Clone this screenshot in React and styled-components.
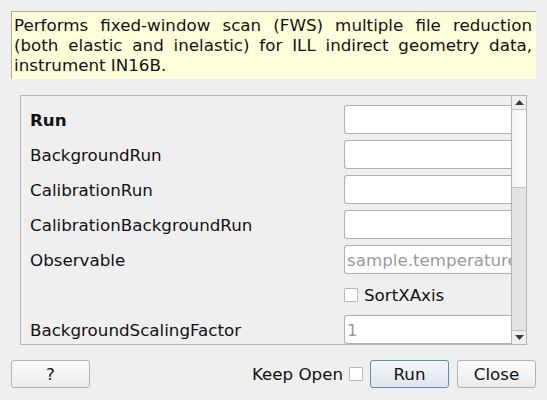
import React from "react";
import styled, { createGlobalStyle } from "styled-components";

const Global = createGlobalStyle`
  html, body { margin: 0; padding: 0; background: #efefef; }
  body { font-family: "DejaVu Sans", sans-serif; font-size: 16.7px; color: #111; }
  * { box-sizing: border-box; }
`;

const Dialog = styled.div`
  width: 547px;
  height: 400px;
  display: flex;
  flex-direction: column;
  padding: 11px 11px 0 11px;
  background: #efefef;
`;

const Description = styled.div`
  height: 68px;
  background: #ffffdc;
  border-top: 1px solid #a9a9a9;
  border-left: 1px solid #a9a9a9;
  padding: 3px 4px 0 2px;
  line-height: 20px;
  text-align: justify;
  text-align-last: left;
`;

const ScrollArea = styled.div`
  margin: 16px 9px 0 9px;
  height: 250px;
  border: 1px solid #b5b5b5;
  display: flex;
  overflow: hidden;
`;

const Viewport = styled.div`
  flex: 1;
  overflow: hidden;
  padding: 9px 0 0 9px;
  display: grid;
  grid-template-columns: 314px 1fr;
  grid-auto-rows: 29px;
  row-gap: 6px;
  align-content: start;
`;

const Label = styled.div`
  display: flex;
  align-items: center;
  font-weight: ${(p) => (p.$bold ? "bold" : "normal")};
  white-space: nowrap;
`;

const Input = styled.div`
  height: 29px;
  background: #fff;
  border: 1px solid #b0b0b0;
  border-right: none;
  border-radius: 3px 0 0 3px;
  display: flex;
  align-items: center;
  padding-left: 2px;
  color: #9a9a9a;
  white-space: nowrap;
  overflow: hidden;
`;

const CheckRow = styled.div`
  display: flex;
  align-items: center;
  gap: 6px;
  height: 27px;
  align-self: center;
`;

const Box = styled.span`
  width: 14px;
  height: 14px;
  background: #fff;
  border: 1px solid #b8b8b8;
  border-radius: 1px;
  display: inline-block;
`;

const ScrollBar = styled.div`
  width: 15px;
  border-left: 1px solid #b5b5b5;
  display: flex;
  flex-direction: column;
  background: #e4e4e4;
`;

const Arrow = styled.div`
  height: 14px;
  background: #efefef;
  border-${(p) => (p.$down ? "top" : "bottom")}: 1px solid #c4c4c4;
  display: flex;
  align-items: center;
  justify-content: center;
  margin-top: ${(p) => (p.$down ? "auto" : "0")};
`;

const Thumb = styled.div`
  height: 78px;
  background: linear-gradient(to right, #f4f4f4, #fbfbfb);
  border-bottom: 1px solid #c4c4c4;
`;

const Footer = styled.div`
  margin-top: 15px;
  display: flex;
  align-items: center;
  height: 28px;
`;

const Button = styled.button`
  width: 79px;
  height: 28px;
  font-family: "DejaVu Sans", sans-serif;
  font-size: 16.7px;
  color: #111;
  border-radius: 3px;
  border: 1px solid ${(p) => (p.$primary ? "#5d8eb5" : "#b3b3b3")};
  background: ${(p) =>
    p.$primary
      ? "linear-gradient(#f3f6f9, #dfe6ec)"
      : "linear-gradient(#fbfbfb, #ececec)"};
  padding: 0;
  margin-left: ${(p) => p.$ml || 0}px;
`;

const Spacer = styled.div`
  flex: 1;
`;

const KeepOpen = styled.span`
  margin-right: 6px;
`;

const Tri = ({ down }) => (
  <svg width="9" height="5" viewBox="0 0 9 5">
    <polygon points={down ? "0,0 9,0 4.5,5" : "0,5 9,5 4.5,0"} fill="#3a3a3a" />
  </svg>
);

export default function App() {
  return (
    <>
      <Global />
      <Dialog>
        <Description>
          Performs fixed-window scan (FWS) multiple file reduction (both elastic
          and inelastic) for ILL indirect geometry data, instrument IN16B.
        </Description>
        <ScrollArea>
          <Viewport>
            <Label $bold>Run</Label>
            <Input />
            <Label>BackgroundRun</Label>
            <Input />
            <Label>CalibrationRun</Label>
            <Input />
            <Label>CalibrationBackgroundRun</Label>
            <Input />
            <Label>Observable</Label>
            <Input>sample.temperature</Input>
            <Label />
            <CheckRow>
              <Box />
              <span>SortXAxis</span>
            </CheckRow>
            <Label>BackgroundScalingFactor</Label>
            <Input>1</Input>
          </Viewport>
          <ScrollBar>
            <Arrow>
              <Tri />
            </Arrow>
            <Thumb />
            <Arrow $down>
              <Tri down />
            </Arrow>
          </ScrollBar>
        </ScrollArea>
        <Footer>
          <Button>?</Button>
          <Spacer />
          <KeepOpen>Keep Open</KeepOpen>
          <Box />
          <Button $primary $ml={7}>Run</Button>
          <Button $ml={8}>Close</Button>
        </Footer>
      </Dialog>
    </>
  );
}
